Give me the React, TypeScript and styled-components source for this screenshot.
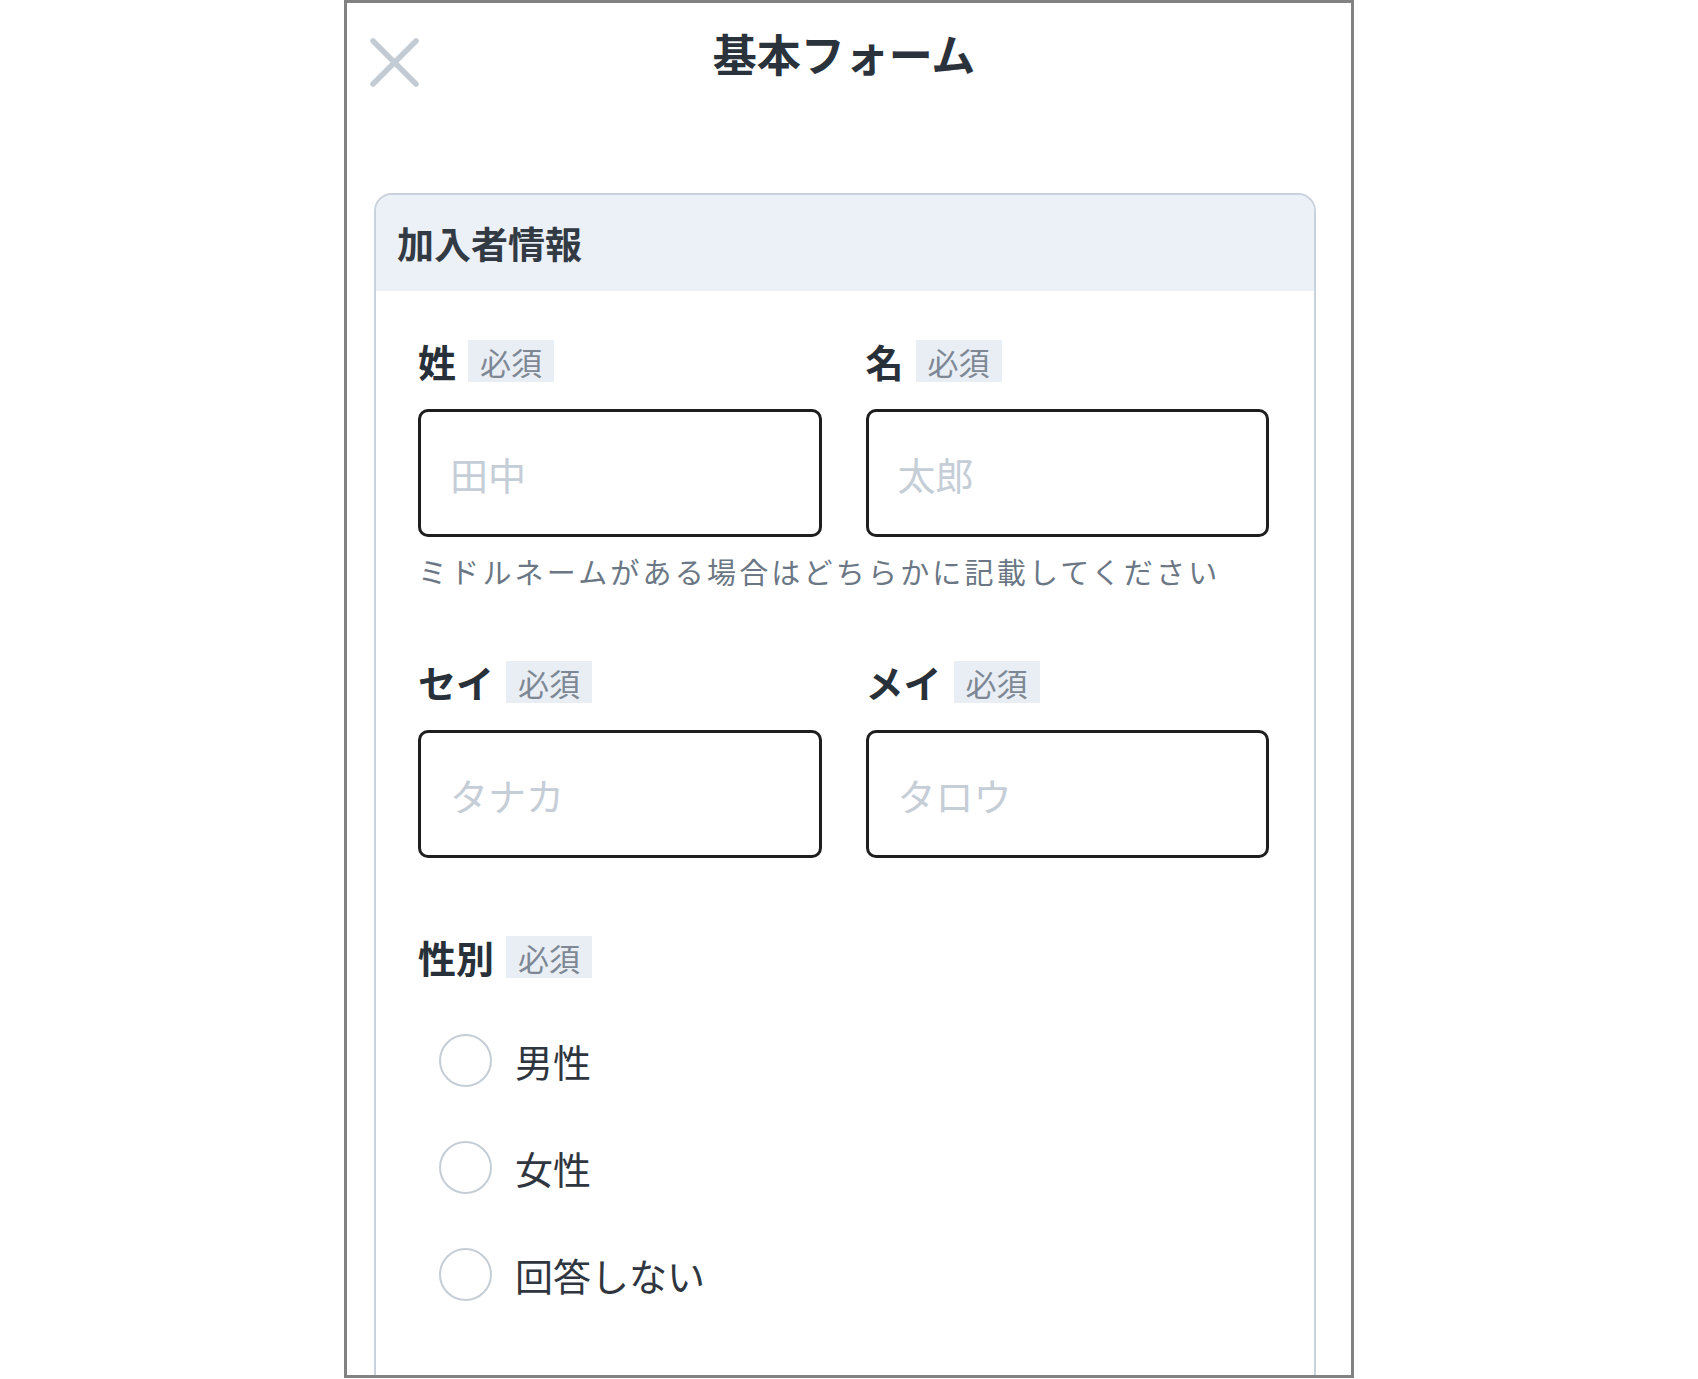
import styled, { createGlobalStyle } from "styled-components";

const GlobalStyle = createGlobalStyle`
  html, body {
    margin: 0;
    padding: 0;
    background: #ffffff;
  }
  body {
    font-family: "Noto Sans CJK JP", "Noto Sans", sans-serif;
    color: #2a323c;
  }
  * {
    box-sizing: border-box;
  }
`;

const Frame = styled.div`
  width: 1010px;
  height: 1378px;
  margin: 0 auto;
  border: 3px solid #828282;
  overflow: hidden;
  background: #ffffff;
`;

const TopBar = styled.div`
  height: 190px;
  display: grid;
  grid-template-columns: 1fr auto 1fr;
  align-items: start;
  padding: 28px 22px 0;
`;

const CloseButton = styled.button`
  justify-self: start;
  margin-top: 6px;
  padding: 0;
  border: none;
  background: none;
  width: 51px;
  height: 51px;
  cursor: pointer;
`;

const Title = styled.h1`
  margin: 0;
  font-size: 44px;
  line-height: 44px;
  font-weight: 700;
  color: #2a323c;
  transform: translateX(-5px);
`;

const Card = styled.section`
  margin: 0 35px 0 27px;
  border: 2px solid #c9d2dc;
  border-radius: 18px 18px 0 0;
  overflow: hidden;
  padding-bottom: 300px;
`;

const CardHeader = styled.div`
  height: 96px;
  display: flex;
  align-items: center;
  padding-left: 21px;
  background: #ecf1f7;
  font-size: 37px;
  font-weight: 700;
  color: #323a44;
`;

const CardBody = styled.div`
  padding: 49px 45px 0 42px;
`;

const FieldRow = styled.div<{ $top?: number }>`
  display: grid;
  grid-template-columns: 1fr 1fr;
  column-gap: 44px;
  margin-top: ${(p) => p.$top ?? 0}px;
`;

const Field = styled.div`
  display: flex;
  flex-direction: column;
  gap: 27px;
`;

const LabelRow = styled.div`
  display: flex;
  align-items: center;
  gap: 12px;
  height: 42px;
`;

const LabelText = styled.span`
  font-size: 38px;
  line-height: 42px;
  font-weight: 700;
  color: #28303a;
`;

const Required = styled.span`
  display: inline-flex;
  align-items: center;
  height: 42px;
  padding: 0 12px;
  background: #e9eef5;
  color: #7d8894;
  font-size: 31px;
  line-height: 1;
`;

const TextInput = styled.input`
  width: 100%;
  height: 128px;
  border: 3px solid #1e1e1e;
  border-radius: 10px;
  padding: 0 0 0 29px;
  font-family: "Noto Sans CJK JP", "Noto Sans", sans-serif;
  font-size: 38px;
  color: #2a323c;
  background: #ffffff;
  outline: none;
  &::placeholder {
    color: #c5cdd7;
  }
`;

const Helper = styled.p`
  margin: 14px 0 0;
  font-size: 29px;
  line-height: 40px;
  color: #6b7785;
  letter-spacing: 3.2px;
  white-space: nowrap;
`;

const Group = styled.div<{ $top: number }>`
  margin-top: ${(p) => p.$top}px;
`;

const RadioList = styled.div`
  margin-top: 29px;
  display: flex;
  flex-direction: column;
`;

const RadioRow = styled.label`
  height: 107px;
  display: flex;
  align-items: center;
  gap: 23px;
  padding-left: 21px;
  cursor: pointer;
`;

const RadioCircle = styled.span`
  width: 53px;
  height: 53px;
  border-radius: 50%;
  border: 2px solid #c5cdd6;
  background: #ffffff;
  flex-shrink: 0;
`;

const RadioText = styled.span`
  font-size: 38px;
  line-height: 1;
  color: #2f3640;
`;

const CloseIcon = () => (
  <svg width="51" height="51" viewBox="0 0 51 51">
    <path
      d="M4 4 L47 47 M47 4 L4 47"
      stroke="#c3ccd5"
      strokeWidth="5.5"
      strokeLinecap="round"
      fill="none"
    />
  </svg>
);

const NameField = ({ label, placeholder }: { label: string; placeholder: string }) => (
  <Field>
    <LabelRow>
      <LabelText>{label}</LabelText>
      <Required>必須</Required>
    </LabelRow>
    <TextInput placeholder={placeholder} />
  </Field>
);

const genders = ["男性", "女性", "回答しない"];

const App = () => {
  return (
    <>
      <GlobalStyle />
      <Frame>
        <TopBar>
          <CloseButton aria-label="閉じる">
            <CloseIcon />
          </CloseButton>
          <Title>基本フォーム</Title>
          <div />
        </TopBar>
        <Card>
          <CardHeader>加入者情報</CardHeader>
          <CardBody>
            <FieldRow>
              <NameField label="姓" placeholder="田中" />
              <NameField label="名" placeholder="太郎" />
            </FieldRow>
            <Helper>ミドルネームがある場合はどちらかに記載してください</Helper>
            <FieldRow $top={70}>
              <NameField label="セイ" placeholder="タナカ" />
              <NameField label="メイ" placeholder="タロウ" />
            </FieldRow>
            <Group $top={78}>
              <LabelRow>
                <LabelText>性別</LabelText>
                <Required>必須</Required>
              </LabelRow>
              <RadioList>
                {genders.map((g) => (
                  <RadioRow key={g}>
                    <RadioCircle />
                    <RadioText>{g}</RadioText>
                  </RadioRow>
                ))}
              </RadioList>
            </Group>
          </CardBody>
        </Card>
      </Frame>
    </>
  );
};

export default App;
